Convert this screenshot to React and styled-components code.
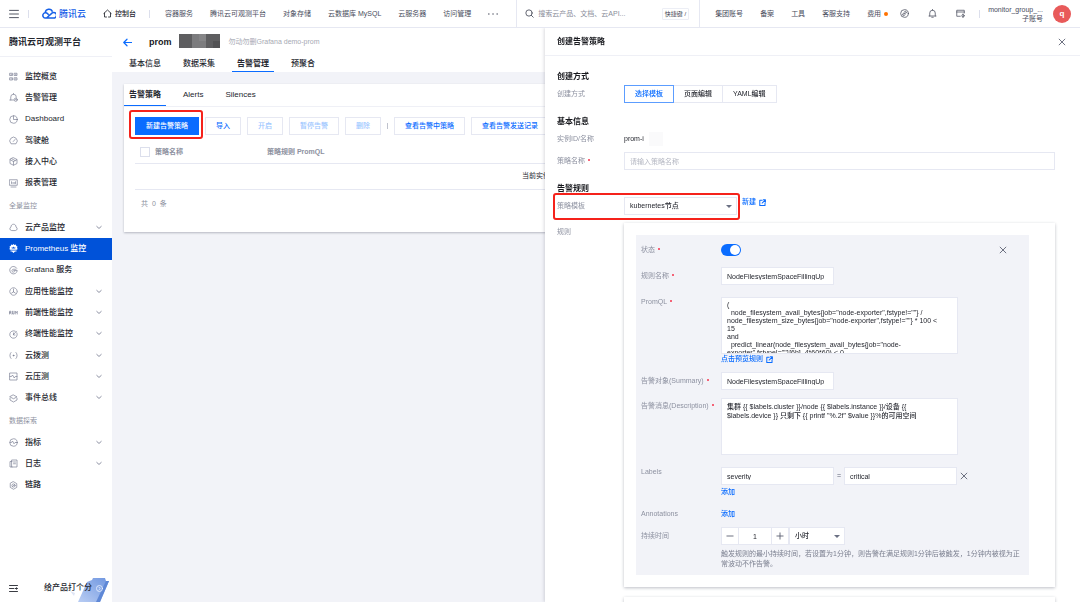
import React from "react";
import styled, { createGlobalStyle, css } from "styled-components";

const blue = "#0a6cff";
const line = "#e6e8f2";

const GlobalStyle = createGlobalStyle`
  *, *::before, *::after { box-sizing: border-box; }
  html, body { margin: 0; height: 100%; }
  body, button, input, textarea, select {
    font-family: "Liberation Sans", "Noto Sans CJK SC", sans-serif;
  }
  body {
    font-size: 7px;
    line-height: 10px;
    color: #24262e;
    background: #f2f3f8;
    overflow: hidden;
  }
  button { margin: 0; padding: 0; border: 0; background: none; color: inherit; font-size: inherit; line-height: inherit; cursor: pointer; }
  a { color: inherit; text-decoration: none; }
  ul { margin: 0; padding: 0; list-style: none; }
  h1, h2, h3 { margin: 0; }
  svg { display: block; flex: none; }
`;

const Svg = styled.svg`
  width: ${(p) => p.$size || 9}px;
  height: ${(p) => p.$size || 9}px;
  fill: none;
  stroke: currentColor;
  stroke-width: ${(p) => p.$stroke || 1.5};
  stroke-linecap: round;
  stroke-linejoin: round;
`;

const Icon = ({ size, stroke, children }) => (
  <Svg viewBox="0 0 18 18" $size={size} $stroke={stroke} aria-hidden="true">
    {children}
  </Svg>
);

const CloseIcon = ({ size = 9 }) => (
  <Icon size={size} stroke={2}>
    <path d="M2.5 2.5l13 13M15.5 2.5l-13 13" />
  </Icon>
);

const ExternalIcon = () => (
  <Icon size={7} stroke={2.6}>
    <path d="M8 3H2v13.500h13.500V10M11 2h5.500v5.500M16.500 2L8 10.500" />
  </Icon>
);

const sideIcons = {
  overview: (
    <>
      <path d="M2 2.500h5v4.500H2zM11 2.500h5v4.500h-5zM2 11.500h5V16H2zM11 11.500h5V16h-5z" />
      <path d="M4 4.800h1M13 4.800h1M4 13.800h1M13 13.800h1" />
    </>
  ),
  bell: (
    <>
      <path d="M1.500 14H9M3.500 14V8a5.500 5.500 0 0 1 11 0v1M9 2.500V1" />
      <circle cx="13.500" cy="13.500" r="3.200" />
      <path d="M13.500 12.500v1.500h1" />
    </>
  ),
  dashboard: (
    <>
      <circle cx="9" cy="9" r="7.500" />
      <path d="M9 1.500V9h7.500" />
    </>
  ),
  cockpit: (
    <>
      <path d="M3.500 15A7.500 7.500 0 1 1 14.500 15z" />
      <path d="M8.500 11L12 7" />
    </>
  ),
  access: (
    <>
      <path d="M9 1.500l7 3.500v8l-7 3.500L2 13V5z" />
      <path d="M2.500 5.500L9 9l6.500-3.500M9 9v7M5.500 3.500L12 7" />
    </>
  ),
  report: (
    <>
      <path d="M1.500 1.500h15v11h-15zM4 16h10" />
      <path d="M5 5.500V9M8 7v2M10.500 7v2M13 5.500V9" />
    </>
  ),
  cloud: <path d="M4.500 15a3.500 3.500 0 0 1-.6-6.700C4 4.500 6 2.500 9 2.500s5 2 5.100 5.800a3.500 3.500 0 0 1-.6 6.700z" />,
  prometheus: (
    <>
      <path
        d="M9 0l2 2 3-1 .5 3 2.500 1-1 3 1.500 2-2 1.500H2.500L.5 10 2 8 1 5l2.500-1L4 1l3 1z M3 13h12v2h-3l-3 3-3-3H3z"
        fill="currentColor"
        stroke="none"
      />
      <path d="M5.500 9V6l2 1.500L9 5l1.500 2.500 2-1.500v3z" fill="#0052d9" stroke="none" />
    </>
  ),
  grafana: (
    <>
      <path d="M15.500 4.500A7.500 7.500 0 1 0 16.500 9H9.500" />
      <path d="M14 6.500H8.500a3 3 0 1 0 3 4.500" />
    </>
  ),
  apm: (
    <>
      <circle cx="9" cy="9" r="7.500" strokeDasharray="6 1.800" />
      <path d="M9 4v5.500M9 9.500l-4 3M9 9.500l4 3" />
    </>
  ),
  rum: <path d="M1 12V6.500h3v3H1.500M3 9.500L4.500 12M7 6.500V12h3V6.500M12.500 12V6.500l2 3 2-3V12" stroke="currentColor" />,
  terminal: (
    <>
      <path d="M12.500 2.300a7.500 7.500 0 1 0 3.200 3.200" />
      <path d="M8.500 9.500L15 2.500M9 6v4h3" />
    </>
  ),
  probe: (
    <>
      <path d="M4 3C1 6 1 12 4 15M14 3c3 3 3 9 0 12" />
      <circle cx="9" cy="9" r="1" fill="currentColor" />
    </>
  ),
  pressure: (
    <>
      <path d="M2 2h14v14H2z" />
      <path d="M2 9h3l2-3 3.500 6 2-3H16" />
    </>
  ),
  bus: (
    <>
      <path d="M9 2l7 3.800-7 3.700-7-3.700z" />
      <path d="M2 8.500v3.500l7 4 7-4V8.500" />
    </>
  ),
  metric: (
    <>
      <circle cx="9" cy="9" r="7.500" />
      <path d="M2 9h3l2-3 3 5.500L12 9h4" />
    </>
  ),
  log: (
    <>
      <path d="M6 2h10v14H6zM6 5H2v11h4" />
      <path d="M9 6h4M9 9.500h4" />
    </>
  ),
  trace: (
    <>
      <path d="M9 1.500l6.500 3.700v7.600L9 16.500l-6.500-3.700V5.200z" />
      <circle cx="9" cy="9" r="3.200" />
      <path d="M7 11l4-4" />
    </>
  ),
};

/* ---------- Top bar ---------- */

const TopBar = styled.header`
  position: relative;
  z-index: 3;
  display: flex;
  align-items: stretch;
  height: 28px;
  background: #fff;
  border-bottom: 1px solid ${line};
  white-space: nowrap;
`;

const TopStart = styled.div`
  display: flex;
  align-items: center;
  padding: 0 18px 0 9px;
  color: #3d4150;
`;

const Rule = styled.span`
  width: 1px;
  height: 8px;
  background: #dcdfec;
`;

const Brand = styled.a`
  display: flex;
  align-items: center;
  gap: 3px;
  margin: 0 17px 0 13px;
  color: #1660e8;
  font-size: 9px;
  font-weight: 500;
`;

const HomeLink = styled.a`
  display: flex;
  align-items: center;
  gap: 3px;
  margin-right: 13px;
  color: #24262e;
  font-weight: 500;
`;

const Menu = styled.button`
  display: flex;
  margin-right: 9px;
`;

const TopNav = styled.nav`
  display: flex;
  gap: 17px;
  margin-left: 15px;
  color: #484c5c;
`;

const Search = styled.label`
  flex: 1;
  display: flex;
  align-items: center;
  gap: 4px;
  min-width: 0;
  padding: 0 10px 0 8px;
  border: solid ${line};
  border-width: 0 1px;
  color: #3d4150;
`;

const SearchInput = styled.input`
  flex: 1;
  min-width: 0;
  padding: 0;
  border: 0;
  outline: 0;
  background: none;
  font-size: 7px;
  line-height: 10px;
  &::placeholder { color: #8a8d9a; }
`;

const Keys = styled.kbd`
  padding: 0 2px;
  border: 1px solid #eceef5;
  border-radius: 1px;
  font: inherit;
  font-size: 6px;
`;

const TopEnd = styled.div`
  display: flex;
  align-items: center;
  padding: 0 9px 0 15px;
  color: #484c5c;
`;

const EndLinks = styled.nav`
  display: flex;
  align-items: center;
  gap: 17px;
`;

const FeeLink = styled.a`
  display: flex;
  align-items: center;
  gap: 3px;
  &::after {
    content: "";
    width: 4px;
    height: 4px;
    border-radius: 50%;
    background: #ff7200;
  }
`;

const EndIcons = styled.div`
  display: flex;
  gap: 19px;
  margin: 0 14px 0 12px;
`;

const Account = styled.div`
  margin: 0 10px 0 8px;
  text-align: right;
  line-height: 9px;
`;

const Avatar = styled.span`
  display: flex;
  align-items: center;
  justify-content: center;
  width: 18px;
  height: 18px;
  border-radius: 50%;
  background: #e85a5a;
  color: #fff;
  font-size: 8px;
  font-weight: 600;
`;

/* ---------- Side bar ---------- */

const Shell = styled.div`
  display: flex;
  height: calc(100vh - 28px);
`;

const Side = styled.aside`
  flex: none;
  display: flex;
  flex-direction: column;
  width: 112px;
  background: #fff;
  white-space: nowrap;
`;

const SideTitle = styled.h1`
  height: 29px;
  margin-bottom: 9px;
  padding-left: 9px;
  border-bottom: 1px solid #eff0f6;
  font-size: 9px;
  line-height: 28px;
  font-weight: 600;
`;

const SideHeading = styled.h2`
  padding-left: 9px;
  color: #8d91a0;
  font-size: 7px;
  font-weight: 400;
  line-height: 23px;
`;

const SideList = styled.ul`
  display: grid;
  grid-auto-rows: 1fr;
  height: ${(p) => p.$height}px;
`;

const SideLink = styled.a`
  display: flex;
  align-items: center;
  gap: 7px;
  height: 100%;
  padding: 0 9px;
  color: #24262e;
  font-size: 8px;
  font-weight: 500;
  & > svg { color: #7c8195; }
  & > svg:last-child:not(:first-child) { margin-left: auto; }
  ${(p) =>
    p.$active &&
    css`
      background: #0052d9;
      color: #fff;
      & > svg { color: #fff; }
    `}
`;

const SideFoot = styled.div`
  display: flex;
  align-items: stretch;
  height: 28px;
  margin-top: auto;
  padding-left: 9px;
`;

const Rate = styled.button`
  position: relative;
  display: flex;
  align-items: center;
  gap: 4px;
  margin-left: auto;
  padding: 0 9px 0 0;
  font-size: 8px;
  font-weight: 500;
  & > span, & > svg:last-child { position: relative; }
`;

const RateArt = styled.svg`
  position: absolute;
  right: 0;
  bottom: 0;
  width: 42px;
  height: 24px;
`;

/* ---------- Page ---------- */

const Main = styled.main`
  flex: 1;
  min-width: 0;
`;

const PageHead = styled.div`
  height: 44px;
  background: #fff;
`;

const PageTitle = styled.div`
  display: flex;
  align-items: center;
  height: 28px;
  padding-left: 11px;
  color: #a6a9b3;
`;

const BackLink = styled.a`
  margin-right: 17px;
  color: ${blue};
`;

const PageName = styled.h2`
  color: #17181d;
  font-size: 9px;
  font-weight: 600;
`;

const Mosaic = styled.svg`
  width: 41px;
  height: 14px;
  margin: 0 9px 2px 7px;
`;

const Tabs = styled.div`
  display: flex;
  gap: 12px;
  padding-left: ${(p) => p.$inset || 0}px;
`;

const Tab = styled.button`
  height: ${(p) => p.$height}px;
  padding: 0 5px;
  border-bottom: 1px solid ${(p) => (p.$active ? blue : "transparent")};
  color: #24262e;
  font-size: 8px;
  font-weight: ${(p) => (p.$active ? 700 : 500)};
`;

const Card = styled.section`
  height: 148px;
  margin: 12px;
  background: #fff;
  box-shadow: 0 1px 2px rgba(54, 58, 80, 0.32);
`;

const CardTabs = styled.div`
  border-bottom: 1px solid #eff0f6;
`;

const Toolbar = styled.div`
  display: flex;
  align-items: center;
  gap: 6px;
  padding: 10px 11px 6px;
  white-space: nowrap;
`;

const ToolButton = styled.button`
  position: relative;
  flex: none;
  height: 18px;
  padding: 0 10px;
  border: 1px solid ${line};
  color: ${blue};
  font-weight: 500;
  &:disabled { color: #9cc6ff; }
  ${(p) =>
    p.$primary &&
    css`
      border-color: ${blue};
      background: ${blue};
      color: #fff;
    `}
`;

const Marker = styled.span`
  position: absolute;
  inset: ${(p) => p.$inset};
  border: 2px solid #f5221b;
  border-radius: 3px;
  pointer-events: none;
`;

const Separator = styled.span`
  flex: none;
  width: 1px;
  height: 6px;
  background: #bfc2cd;
`;

const Table = styled.table`
  width: calc(100% - 22px);
  margin: 0 11px;
  border-collapse: collapse;
  table-layout: fixed;
  text-align: left;
  th {
    height: 22px;
    padding: 0;
    border-bottom: 1px solid ${line};
    color: #8d91a0;
    font-weight: 600;
  }
  th:first-child { width: 132px; padding-left: 5px; }
  td {
    height: 26px;
    padding: 0 0 0 387px;
    border-bottom: 1px solid ${line};
  }
`;

const CheckLabel = styled.label`
  display: flex;
  align-items: center;
  gap: 5px;
`;

const Check = styled.input`
  appearance: none;
  width: 10px;
  height: 10px;
  margin: 0;
  border: 1px solid #dcdfec;
  background: #fff;
`;

const Total = styled.p`
  margin: 0;
  padding: 9px 17px;
  color: #8d91a0;
  white-space: pre;
`;

/* ---------- Drawer ---------- */

const Drawer = styled.aside`
  position: fixed;
  z-index: 2;
  top: 28px;
  right: 0;
  bottom: 0;
  width: 535px;
  background: #fff;
  box-shadow: -1px 0 3px rgba(54, 58, 80, 0.18);
  overflow: hidden;
`;

const DrawerHead = styled.div`
  display: flex;
  align-items: center;
  justify-content: space-between;
  height: 28px;
  padding: 0 14px 0 12px;
  border-bottom: 1px solid #eff0f6;
  color: #5b6072;
`;

const Title = styled.h2`
  color: #17181d;
  font-size: 8px;
  line-height: 12px;
  font-weight: 700;
`;

const Form = styled.form`
  display: flex;
  flex-direction: column;
  gap: 13px;
  padding: 15px 25px 0 12px;
`;

const Group = styled.section`
  display: flex;
  flex-direction: column;
`;

const Rows = styled.div`
  display: flex;
  flex-direction: column;
  gap: 4px;
  padding-top: 2px;
`;

const Row = styled.div`
  position: relative;
  display: grid;
  grid-template-columns: ${(p) => (p.$inner ? 80 : 67)}px minmax(0, 1fr);
  align-items: ${(p) => (p.$top ? "start" : "center")};
  min-height: ${(p) => (p.$low ? 10 : 18)}px;
  margin-top: ${(p) => (p.$apart ? 4 : 0)}px;
`;

const Name = styled.label`
  padding-top: ${(p) => p.$drop || 0}px;
  color: #8d91a0;
  white-space: nowrap;
  ${(p) =>
    p.$required &&
    css`
      &::after {
        content: "";
        display: inline-block;
        width: 2px;
        height: 2px;
        margin: 0 0 2px 3px;
        border-radius: 50%;
        background: #f5334d;
      }
    `}
`;

const Segments = styled.div`
  display: flex;
`;

const Segment = styled.button`
  height: 18px;
  padding: 0 10px;
  border: 1px solid ${(p) => (p.$active ? "#5c9dff" : line)};
  color: ${(p) => (p.$active ? blue : "#24262e")};
  font-weight: 500;
  & + & { border-left: 0; }
`;

const Instance = styled.span`
  display: flex;
  align-items: center;
  gap: 5px;
  font-weight: 500;
  &::after {
    content: "";
    width: 14px;
    height: 14px;
    background: #fafafb;
  }
`;

const fieldStyle = css`
  border: 1px solid ${line};
  border-radius: 0;
  outline: 0;
  background: #fff;
  color: #24262e;
  font-size: 7px;
  line-height: 12px;
  font-weight: ${(p) => (p.$plain ? 400 : 500)};
`;

const Input = styled.input`
  ${fieldStyle}
  width: ${(p) => (p.$wide ? "100%" : "113px")};
  height: 18px;
  padding: 0 5px;
  text-align: ${(p) => (p.$center ? "center" : "left")};
  &::placeholder { color: #b4b7c2; }
`;

const Area = styled.textarea`
  ${fieldStyle}
  display: block;
  width: 237px;
  height: 57px;
  padding: 3px 12px 3px 5px;
  line-height: ${(p) => p.$line}px;
  resize: none;
  overflow: hidden;
`;

const SelectBox = styled.span`
  position: relative;
  display: block;
  width: ${(p) => p.$width}px;
  &::after {
    content: "";
    position: absolute;
    top: 8px;
    right: 5px;
    border: solid transparent;
    border-width: 3px 3px 0;
    border-top-color: #6b7083;
    pointer-events: none;
  }
`;

const Select = styled.select`
  ${fieldStyle}
  appearance: none;
  display: block;
  width: 100%;
  height: 18px;
  padding: 0 5px;
`;

const Inline = styled.div`
  display: flex;
  align-items: ${(p) => (p.$top ? "flex-start" : "center")};
  gap: ${(p) => p.$gap || 0}px;
  color: #5b6072;
`;

const TextLink = styled.a`
  display: flex;
  align-items: center;
  gap: 3px;
  width: max-content;
  color: ${blue};
  font-weight: 500;
`;

const RuleCard = styled.div`
  padding: 12px 26px 12px 12px;
  background: #fff;
  box-shadow: 0 1px 3px rgba(54, 58, 80, 0.32);
`;

const RuleStack = styled.div`
  display: flex;
  flex-direction: column;
  gap: 10px;
  padding-top: 4px;
`;

const RuleBody = styled.div`
  display: flex;
  flex-direction: column;
  gap: 8px;
  padding: 6px 5px;
  background: #f2f3f8;
`;

const Switch = styled.input`
  appearance: none;
  display: flex;
  align-items: center;
  justify-content: flex-end;
  width: 20px;
  height: 12px;
  margin: 0;
  padding: 1px;
  border-radius: 6px;
  background: ${blue};
  &::before {
    content: "";
    width: 10px;
    height: 10px;
    border-radius: 50%;
    background: #fff;
  }
`;

const RemoveRule = styled.button`
  margin-left: auto;
  margin-right: 17px;
`;

const StepButton = styled.button`
  display: flex;
  align-items: center;
  justify-content: center;
  width: 18px;
  height: 18px;
  border: 1px solid ${line};
  background: #fff;
`;

const StepInput = styled(Input)`
  width: 32px;
  border-width: 1px 0;
`;

const Hint = styled.p`
  margin: 4px 0 0;
  color: #7c8090;
`;

const Stack = styled.div`
  display: flex;
  flex-direction: column;
  gap: ${(p) => p.$gap || 0}px;
`;

/* ---------- Data ---------- */

const topLinks = ["容器服务", "腾讯云可观测平台", "对象存储", "云数据库 MySQL", "云服务器", "访问管理"];
const endLinks = ["集团账号", "备案", "工具", "客服支持"];

const sideGroups = [
  {
    height: 128,
    items: [
      ["overview", "监控概览"],
      ["bell", "告警管理"],
      ["dashboard", "Dashboard"],
      ["cockpit", "驾驶舱"],
      ["access", "接入中心"],
      ["report", "报表管理"],
    ],
  },
  {
    title: "全景监控",
    height: 192,
    items: [
      ["cloud", "云产品监控", true],
      ["prometheus", "Prometheus 监控"],
      ["grafana", "Grafana 服务"],
      ["apm", "应用性能监控", true],
      ["rum", "前端性能监控", true],
      ["terminal", "终端性能监控", true],
      ["probe", "云拨测", true],
      ["pressure", "云压测", true],
      ["bus", "事件总线", true],
    ],
  },
  {
    title: "数据探索",
    height: 64,
    items: [
      ["metric", "指标", true],
      ["log", "日志", true],
      ["trace", "链路"],
    ],
  },
];

const promql = `(
  node_filesystem_avail_bytes{job="node-exporter",fstype!=""} / node_filesystem_size_bytes{job="node-exporter",fstype!=""} * 100 < 15
and
  predict_linear(node_filesystem_avail_bytes{job="node-exporter",fstype!=""}[6h], 4*60*60) < 0
)`;

const message =
  '集群 {{ $labels.cluster }}/node {{ $labels.instance }}/设备 {{ $labels.device }} 只剩下 {{ printf "%.2f" $value }}%的可用空间';

function Header() {
  return (
    <TopBar>
      <TopStart>
        <Menu aria-label="菜单">
          <Icon size={10} stroke={1.6}>
            <path d="M1 2.500h16M1 9h16M1 15.500h16" />
          </Icon>
        </Menu>
        <Rule />
        <Brand href="#">
          <svg width="14" height="11" viewBox="0 0 28 22" fill="none" stroke="currentColor" strokeWidth="3" strokeLinejoin="round">
            <path d="M9 20L20.500 9.800A5.600 5.600 0 1 1 22 20H7A5.300 5.300 0 1 1 11 11.200L13.500 13.500" />
            <path d="M6.500 9.500A7.500 7.500 0 0 1 21 7.500" />
          </svg>
          腾讯云
        </Brand>
        <HomeLink href="#">
          <Icon stroke={1.7}>
            <path d="M7 16H3V8l-1.500 1L9 2l7.500 7L15 8v8h-4" />
          </Icon>
          控制台
        </HomeLink>
        <Rule />
        <TopNav>
          {topLinks.map((t) => (
            <a href="#" key={t}>{t}</a>
          ))}
          <button aria-label="更多">
            <Icon size={10} stroke={2.4}>
              <path d="M1.500 9h.1M9 9h.1M16.400 9h.1" />
            </Icon>
          </button>
        </TopNav>
      </TopStart>
      <Search>
        <Icon stroke={1.6}>
          <circle cx="8" cy="8" r="6.300" />
          <path d="M12.600 12.600L16.500 16.500" />
        </Icon>
        <SearchInput aria-label="搜索" placeholder="搜索云产品、文档、云API..." />
        <Keys>快捷键 /</Keys>
      </Search>
      <TopEnd>
        <EndLinks>
          {endLinks.map((t) => (
            <a href="#" key={t}>{t}</a>
          ))}
          <FeeLink href="#">费用</FeeLink>
        </EndLinks>
        <EndIcons>
          <Icon>
            <circle cx="9" cy="9" r="7.700" />
            <path d="M8 6.500l2-1.500a2 2 0 0 1 2.500 3L11 9.500M10 11.500L8 13a2 2 0 0 1-2.500-3L7 8.500M7.500 10.500l3-3" />
          </Icon>
          <Icon>
            <path d="M2 14h14M3.500 14V8a5.500 5.500 0 0 1 11 0v6M9 2.500V1M7.500 16.500h3" />
          </Icon>
          <Icon>
            <path d="M8.500 14.500H1.500V2.500h15V8M1.500 6h15" />
            <circle cx="14" cy="13.500" r="2.300" />
            <path d="M14 10v1M14 16v1" />
          </Icon>
        </EndIcons>
        <Rule />
        <Account>
          <div>monitor_group_...</div>
          <div>子账号</div>
        </Account>
        <Avatar>q</Avatar>
      </TopEnd>
    </TopBar>
  );
}

function SideBar() {
  return (
    <Side>
      <SideTitle>腾讯云可观测平台</SideTitle>
      {sideGroups.map((g) => (
        <nav key={g.height}>
          {g.title && <SideHeading>{g.title}</SideHeading>}
          <SideList $height={g.height}>
            {g.items.map(([icon, text, open]) => (
              <li key={icon}>
                <SideLink href="#" $active={icon === "prometheus"}>
                  <Icon stroke={1.4}>{sideIcons[icon]}</Icon>
                  {text}
                  {open && (
                    <Icon size={8} stroke={2}>
                      <path d="M4 5.500L9 10l5-4.500" />
                    </Icon>
                  )}
                </SideLink>
              </li>
            ))}
          </SideList>
        </nav>
      ))}
      <SideFoot>
        <button aria-label="收起">
          <Icon stroke={1.8}>
            <path d="M1 3h16M1 9h9M1 15h16M13 9h4M15 7.500L13 9l2 1.500" />
          </Icon>
        </button>
        <Rate>
          <RateArt viewBox="0 0 42 24" aria-hidden="true">
            <defs>
              <linearGradient id="board" x1="1" y1="0" x2="0" y2="1">
                <stop offset="0" stopColor="#6f96e0" />
                <stop offset="1" stopColor="#b9cdf3" />
              </linearGradient>
            </defs>
            <path d="M0 13l4 5 1-3z" fill="#dfe5f5" />
            <path d="M17 4L22 2 23 0h12l1 3h3L30 24H8z" fill="url(#board)" />
            <path d="M36 3h3L30 24h-4z" fill="#5f88d6" />
          </RateArt>
          <span>给产品打个分</span>
          <Icon size={7} stroke={2}>
            <g stroke="#eef3ff">
              <circle cx="9" cy="9" r="7.800" />
              <path d="M7.500 5.500L11 9l-3.500 3.500" />
            </g>
          </Icon>
        </Rate>
      </SideFoot>
    </Side>
  );
}

function Policies() {
  return (
    <Main>
      <PageHead>
        <PageTitle>
          <BackLink href="#" aria-label="返回">
            <Icon stroke={2.4}>
              <path d="M17 9H2M8 2.500L1.500 9 8 15.500" />
            </Icon>
          </BackLink>
          <PageName>prom</PageName>
          <Mosaic viewBox="0 0 41 14" aria-hidden="true">
            <path d="M0 0h41v14H0z" fill="#5e5e60" />
            <path d="M13 0h14v14H13z" fill="#7c7c7e" />
            <path d="M20 0h7v7h-7z" fill="#858587" />
            <path d="M34 7h7v7h-7z" fill="#525254" />
          </Mosaic>
          勿动勿删Grafana demo-prom
        </PageTitle>
        <Tabs $inset={12}>
          {["基本信息", "数据采集", "告警管理", "预聚合"].map((t) => (
            <Tab key={t} $height={16} $active={t === "告警管理"}>{t}</Tab>
          ))}
        </Tabs>
      </PageHead>
      <Card>
        <CardTabs>
          <Tabs>
            {["告警策略", "Alerts", "Silences"].map((t) => (
              <Tab key={t} $height={22} $active={t === "告警策略"}>{t}</Tab>
            ))}
          </Tabs>
        </CardTabs>
        <Toolbar>
          <ToolButton $primary>
            新建告警策略
            <Marker $inset="-8px -5px -5px -7px" />
          </ToolButton>
          <ToolButton>导入</ToolButton>
          <ToolButton disabled>开启</ToolButton>
          <ToolButton disabled>暂停告警</ToolButton>
          <ToolButton disabled>删除</ToolButton>
          <Separator />
          <ToolButton>查看告警中策略</ToolButton>
          <ToolButton>查看告警发送记录</ToolButton>
        </Toolbar>
        <Table>
          <thead>
            <tr>
              <th>
                <CheckLabel>
                  <Check type="checkbox" />
                  策略名称
                </CheckLabel>
              </th>
              <th>策略规则 PromQL</th>
            </tr>
          </thead>
          <tbody>
            <tr>
              <td colSpan={2}>当前实例</td>
            </tr>
          </tbody>
        </Table>
        <Total>共  0  条</Total>
      </Card>
    </Main>
  );
}

function CreateDrawer() {
  return (
    <Drawer>
      <DrawerHead>
        <Title>创建告警策略</Title>
        <button aria-label="关闭"><CloseIcon size={8} /></button>
      </DrawerHead>
      <Form onSubmit={(e) => e.preventDefault()}>
        <Group>
          <Title as="h3">创建方式</Title>
          <Rows>
            <Row>
              <Name as="span">创建方式</Name>
              <Segments>
                <Segment type="button" $active>选择模板</Segment>
                <Segment type="button">页面编辑</Segment>
                <Segment type="button">YAML编辑</Segment>
              </Segments>
            </Row>
          </Rows>
        </Group>
        <Group>
          <Title as="h3">基本信息</Title>
          <Rows>
            <Row>
              <Name as="span">实例ID/名称</Name>
              <Instance>prom-i</Instance>
            </Row>
            <Row>
              <Name htmlFor="policy" $required>策略名称</Name>
              <Input id="policy" $wide $plain placeholder="请输入策略名称" />
            </Row>
          </Rows>
        </Group>
        <Group>
          <Title as="h3">告警规则</Title>
          <Rows>
            <Row>
              <Name htmlFor="template">策略模板</Name>
              <Inline $gap={5} $top>
                <SelectBox $width={113}>
                  <Select id="template"><option>kubernetes节点</option></Select>
                </SelectBox>
                <TextLink href="#">新建 <ExternalIcon /></TextLink>
              </Inline>
              <Marker $inset="-4px 315px -5px -4px" />
            </Row>
            <Row $top>
              <Name as="span" $drop={8}>规则</Name>
              <RuleStack>
                <RuleCard>
                  <RuleBody>
                    <Row $inner>
                      <Name htmlFor="enabled" $required>状态</Name>
                      <Inline>
                        <Switch id="enabled" type="checkbox" role="switch" defaultChecked />
                        <RemoveRule type="button" aria-label="删除规则"><CloseIcon size={8} /></RemoveRule>
                      </Inline>
                    </Row>
                    <Row $inner>
                      <Name htmlFor="rule" $required>规则名称</Name>
                      <Input id="rule" defaultValue="NodeFilesystemSpaceFillingUp" />
                    </Row>
                    <Row $inner $top $apart>
                      <Name htmlFor="promql" $required>PromQL</Name>
                      <div>
                        <Area id="promql" $line={8} defaultValue={promql} />
                        <TextLink href="#">点击预览规则 <ExternalIcon /></TextLink>
                      </div>
                    </Row>
                    <Row $inner>
                      <Name htmlFor="summary" $required>告警对象(Summary)</Name>
                      <Input id="summary" defaultValue="NodeFilesystemSpaceFillingUp" />
                    </Row>
                    <Row $inner $top>
                      <Name htmlFor="desc" $required $drop={3}>告警消息(Description)</Name>
                      <Area id="desc" $line={9} defaultValue={message} />
                    </Row>
                    <Row $inner $top $apart>
                      <Name htmlFor="label-key">Labels</Name>
                      <Stack $gap={2}>
                        <Inline $gap={3}>
                          <Input id="label-key" defaultValue="severity" />
                          =
                          <Input aria-label="Label value" defaultValue="critical" />
                          <button type="button" aria-label="移除"><CloseIcon size={8} /></button>
                        </Inline>
                        <TextLink href="#">添加</TextLink>
                      </Stack>
                    </Row>
                    <Row $inner $low $apart>
                      <Name as="span">Annotations</Name>
                      <TextLink href="#">添加</TextLink>
                    </Row>
                    <Row $inner $top>
                      <Name htmlFor="duration" $drop={4}>持续时间</Name>
                      <div>
                        <Inline>
                          <StepButton type="button" aria-label="减少">
                            <Icon size={8} stroke={2}><path d="M2 9h14" /></Icon>
                          </StepButton>
                          <StepInput id="duration" $center defaultValue="1" />
                          <StepButton type="button" aria-label="增加">
                            <Icon size={8} stroke={2}><path d="M2 9h14M9 2v14" /></Icon>
                          </StepButton>
                          <SelectBox $width={56}>
                            <Select aria-label="时间单位"><option>小时</option></Select>
                          </SelectBox>
                        </Inline>
                        <Hint>
                          触发规则的最小持续时间，若设置为1分钟，则告警在满足规则1分钟后被触发，1分钟内被视为正常波动不作告警。
                        </Hint>
                      </div>
                    </Row>
                  </RuleBody>
                </RuleCard>
                <RuleCard />
              </RuleStack>
            </Row>
          </Rows>
        </Group>
      </Form>
    </Drawer>
  );
}

export default function App() {
  return (
    <>
      <GlobalStyle />
      <Header />
      <Shell>
        <SideBar />
        <Policies />
      </Shell>
      <CreateDrawer />
    </>
  );
}
